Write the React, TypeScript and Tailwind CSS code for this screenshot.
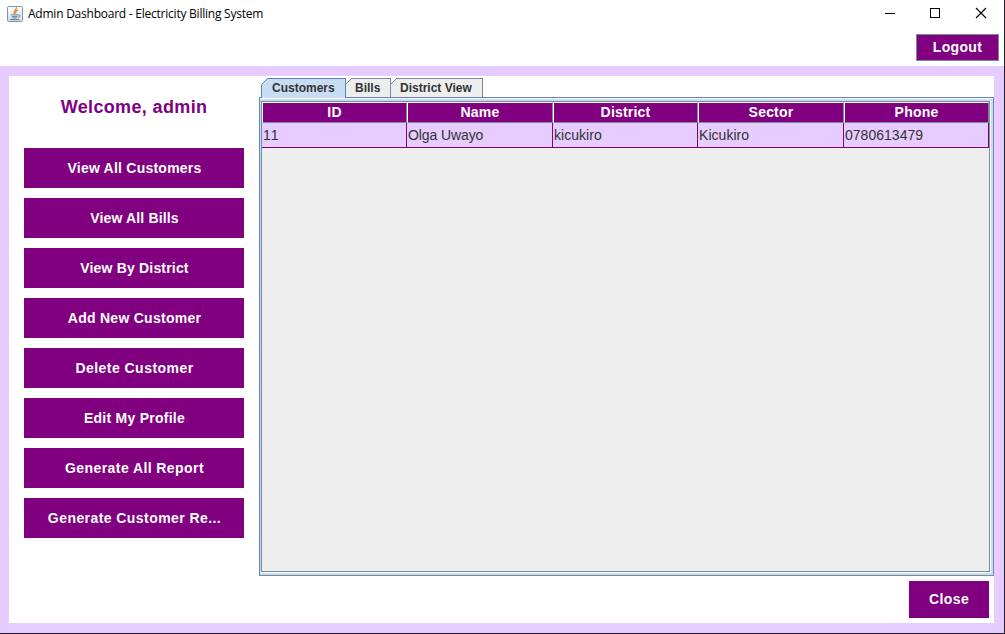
const buttons = [
  { label: 'View All Customers', spacing: 'tracking-[0.23px]' },
  { label: 'View All Bills', spacing: 'tracking-[0.15px]' },
  { label: 'View By District', spacing: 'tracking-[0.18px]' },
  { label: 'Add New Customer', spacing: 'tracking-[0.27px]' },
  { label: 'Delete Customer', spacing: 'tracking-[0.46px]' },
  { label: 'Edit My Profile', spacing: 'tracking-[0.26px]' },
  { label: 'Generate All Report', spacing: 'tracking-[0.42px]' },
  { label: 'Generate Customer Re...', spacing: 'tracking-[0.43px]' },
];

const headers = ['ID', 'Name', 'District', 'Sector', 'Phone'];
const row = [
  { text: '11', style: '[font-kerning:none]' },
  { text: 'Olga Uwayo', style: 'tracking-[-0.1px]' },
  { text: 'kicukiro', style: 'tracking-[0.04px]' },
  { text: 'Kicukiro', style: 'tracking-[0.04px]' },
  { text: '0780613479', style: 'tracking-[0.02px]' },
];

function JavaIcon() {
  return (
    <svg width="16" height="16" viewBox="0 0 16 16" fill="none">
      <defs>
        <linearGradient id="tile" x1="0" y1="0" x2="0" y2="1">
          <stop offset="0" stopColor="#ffffff" />
          <stop offset="1" stopColor="#d5dce3" />
        </linearGradient>
      </defs>
      <rect x=".5" y=".5" width="15" height="15" rx="1.2" fill="url(#tile)" stroke="#7b97ad" />
      <path d="M9.4 1.4C10.2 4 5.4 4.6 7.5 8M10.9 4.2C8.4 5.1 8.1 6.2 9 7.8" stroke="#ee8533" strokeWidth="1.3" />
      <path d="M4 8.9h7.2M4.8 10.6h5.6M5.4 12h4.4M3 13.6h9.3M11.4 9c2.5-.5 2 2-.3 2.3" stroke="#547f9f" strokeWidth=".95" />
    </svg>
  );
}

function TitleBar() {
  return (
    <header className="flex h-7 items-start justify-between">
      <div className="flex items-center gap-[5px] pl-[7px] pt-[5px]">
        <JavaIcon />
        <span className="whitespace-nowrap pt-px font-['Open_Sans','Noto_Sans',sans-serif] text-[12px] leading-4 tracking-[-0.235px] text-black">
          Admin Dashboard - Electricity Billing System
        </span>
      </div>
      <svg width="119" height="27" className="shrink-0" fill="none" stroke="#000" shapeRendering="crispEdges">
        <path d="M0 13.5h10M45.5 8.5h9v9h-9z" />
        <path d="M91 8l10 10M101 8l-10 10" shapeRendering="auto" strokeWidth="1.15" />
      </svg>
    </header>
  );
}

/* Cuts the upper left corner off a tab. */
function TabCorner({ fill, stroke }: { fill: string; stroke: string }) {
  return (
    <svg width="7" height="7" className="absolute -left-px -top-px" fill="none">
      <path d="M0 0H7V7H0z" fill="#fff" />
      <path d="M.5 7V6.5L6.5.5H7V7z" fill={fill} />
      <path d="M.5 7V6.5L6.5.5H7" stroke={stroke} />
    </svg>
  );
}

function InactiveTab({ label, width }: { label: string; width: string }) {
  return (
    <div className={`relative h-[19px] border-r border-t border-[#7a8a99] bg-[#eeeeee] pl-[9px] ${width}`}>
      <svg width="6" height="7" className="absolute -top-px left-0" fill="none">
        <path d="M0 0H6L0 6z" fill="#fff" />
        <path d="M0 6L6 0" stroke="#7a8a99" />
      </svg>
      {label}
    </div>
  );
}

function Tabs() {
  return (
    <div className="relative z-10 -mb-px ml-0.5 flex h-5 items-start whitespace-nowrap text-[12px] font-bold leading-[19px] text-[#333333]">
      <div className="relative h-5 w-[85px] border-l border-r border-t border-[#6382bf] bg-[#c8ddf2] pl-[10px]">
        <TabCorner fill="#c8ddf2" stroke="#6382bf" />
        Customers
      </div>
      <InactiveTab label="Bills" width="w-[45px]" />
      <InactiveTab label="District View" width="w-[92px]" />
    </div>
  );
}

function CustomerTable() {
  return (
    <div className="grid grid-cols-[145px_146px_145px_146px_145px]">
      {headers.map((h) => (
        <div key={h} className="flex h-[21px] items-center justify-center border border-b-[#7a8a99] border-l-white border-r-[#7a8a99] border-t-white bg-[#800080] text-[14px] font-bold tracking-[0.2px] text-white">
          {h}
        </div>
      ))}
      {row.map((c) => (
        <div key={c.text} className="h-[25px] whitespace-nowrap border-b border-r border-[#800080] bg-[#e6ccff] pl-px text-[14px] leading-[24px] text-[#333333]">
          <span className={c.style}>{c.text}</span>
        </div>
      ))}
    </div>
  );
}

export default function App() {
  return (
    <div className="flex h-[634px] w-[1005px] flex-col overflow-hidden border-b border-r border-[#241f2b] bg-white font-['Liberation_Sans',Arial,sans-serif]">
      <TitleBar />
      <div className="flex h-[38px] items-start justify-end pr-[5px] pt-[6px]">
        <button className="h-[27px] w-[83px] border border-[#7a8a99] bg-[#800080] text-[14px] font-bold tracking-[0.32px] text-white">Logout</button>
      </div>
      <main className="flex h-[567px] bg-[#e6ccff] pb-[10px] pl-[9px] pr-[10px] pt-[10px]">
        <div className="flex w-full bg-white">
          <aside className="flex w-[250px] flex-col gap-[10px] px-[15px] pt-[20px]">
            <h1 className="mb-[20px] h-[22px] text-center text-[18px] font-bold leading-[22px] tracking-[0.36px] text-[#800080]">Welcome, admin</h1>
            {buttons.map((b) => (
              <button key={b.label} className="flex h-10 shrink-0 items-center justify-center bg-[#800080] pl-px text-[14px] font-bold text-white">
                <span className={`whitespace-nowrap ${b.spacing}`}>{b.label}</span>
              </button>
            ))}
          </aside>
          <section className="flex w-[735px] flex-col pt-[2px]">
            <Tabs />
            <div className="h-[479px] shrink-0 border border-b-[#7a8a99] border-l-[#6382bf] border-r-[#7a8a99] border-t-[#6382bf] bg-white pt-px">
              <div className="h-[476px] border-b-2 border-l border-r-2 border-t-2 border-[#c8ddf2] pb-px pr-px">
                <div className="h-[471px] border border-[#7a8a99] bg-[#eeeeee]">
                  <CustomerTable />
                </div>
              </div>
            </div>
            <div className="flex justify-end pr-[5px] pt-[5px]">
              <button className="h-[37px] w-20 bg-[#800080] text-[14px] font-bold tracking-[0.4px] text-white">Close</button>
            </div>
          </section>
        </div>
      </main>
    </div>
  );
}
